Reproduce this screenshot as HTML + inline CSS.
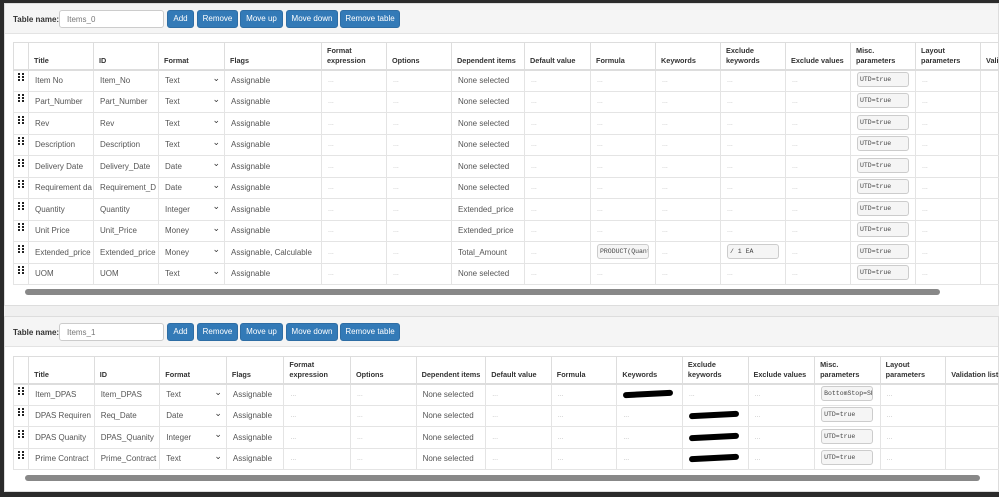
<!DOCTYPE html>
<html><head><meta charset="utf-8"><style>
*{box-sizing:border-box;margin:0;padding:0}
body{width:999px;height:497px;background:#2b2b2b;font-family:"Liberation Sans",Arial,sans-serif;overflow:hidden;position:relative}
.pn{position:absolute;left:4px;width:995px;background:#fff;border:1px solid #ddd}
.hd{height:30px;background:#f5f5f5;border-bottom:1px solid #e3e3e3;position:relative}
.lbl{position:absolute;left:8px;top:11px;font-size:8px;font-weight:bold;color:#333}
.inp{position:absolute;left:54px;top:6px;width:105px;height:18px;border:1px solid #ccc;border-radius:3px;background:#fff;font-size:8px;color:#777;padding:4px 7px}
.b{position:absolute;top:6px;height:18px;background:#337ab7;border:1px solid #2e6da4;border-radius:3px;color:#fff;font-size:8px;text-align:center;line-height:16px}
table{position:absolute;left:8px;border-collapse:collapse;table-layout:fixed;font-size:8px;color:#555}
th{font-weight:bold;color:#333;text-align:left;vertical-align:bottom;padding:2px 3px 3px 5px;border:1px solid #ddd;border-bottom:2px solid #ddd;height:27px;line-height:10px;font-size:7.3px;white-space:normal}
td{border:1px solid #e4e4e4;height:21.5px;padding:0 6px;white-space:nowrap;overflow:hidden}
td.d{color:#bbb;font-size:7px}
td.g{padding:0 0 0 4px}
.gr{display:inline-block;width:2px;height:2px;background:#222;box-shadow:0 3px #222,0 6px #222,4px 0 #222,4px 3px #222,4px 6px #222;vertical-align:top;margin-top:-3px}
.sel{position:relative}
.sel:after{content:"⌄";position:absolute;right:4px;top:2px;font-size:9px;color:#333}
.m{display:inline-block;border:1px solid #ccc;border-radius:3px;background:#f5f5f5;font-family:"Liberation Mono",monospace;font-size:6.5px;color:#444;padding:3px 2px;width:52px;height:15px;overflow:hidden}
.red{display:inline-block;width:50px;height:6px;background:#000;border-radius:3px;transform:rotate(-3deg)}
.sb{position:absolute;left:20px;height:6px;background:#888;border-radius:3px}
</style></head><body>

<div class="pn" style="top:3px;height:303px">
 <div class="hd"><span class="lbl">Table name:</span><div class="inp">Items_0</div>
  <div class="b" style="left:162px;width:27px">Add</div>
  <div class="b" style="left:192px;width:41px">Remove</div>
  <div class="b" style="left:235px;width:43px">Move up</div>
  <div class="b" style="left:281px;width:52px">Move down</div>
  <div class="b" style="left:335px;width:60px">Remove table</div>
 </div>
 <table style="top:38px;width:1020px">
 <colgroup><col style="width:15px"><col style="width:65px"><col style="width:65px"><col style="width:66px"><col style="width:97px"><col style="width:65px"><col style="width:65px"><col style="width:73px"><col style="width:66px"><col style="width:65px"><col style="width:65px"><col style="width:65px"><col style="width:65px"><col style="width:65px"><col style="width:65px"><col style="width:53px"></colgroup>
 <tr><th></th><th>Title</th><th>ID</th><th>Format</th><th>Flags</th><th>Format expression</th><th>Options</th><th style="white-space:nowrap">Dependent items</th><th>Default value</th><th>Formula</th><th>Keywords</th><th>Exclude keywords</th><th style="white-space:nowrap">Exclude values</th><th>Misc. parameters</th><th>Layout parameters</th><th>Vali</th></tr>
 <tr><td class="g"><span class="gr"></span></td><td>Item No</td><td>Item_No</td><td class="sel">Text</td><td>Assignable</td><td class="d">...</td><td class="d">...</td><td>None selected</td><td class="d">...</td><td class="d">...</td><td class="d">...</td><td class="d">...</td><td class="d">...</td><td><span class="m">UTD=true</span></td><td class="d">...</td><td></td></tr>
 <tr><td class="g"><span class="gr"></span></td><td>Part_Number</td><td>Part_Number</td><td class="sel">Text</td><td>Assignable</td><td class="d">...</td><td class="d">...</td><td>None selected</td><td class="d">...</td><td class="d">...</td><td class="d">...</td><td class="d">...</td><td class="d">...</td><td><span class="m">UTD=true</span></td><td class="d">...</td><td></td></tr>
 <tr><td class="g"><span class="gr"></span></td><td>Rev</td><td>Rev</td><td class="sel">Text</td><td>Assignable</td><td class="d">...</td><td class="d">...</td><td>None selected</td><td class="d">...</td><td class="d">...</td><td class="d">...</td><td class="d">...</td><td class="d">...</td><td><span class="m">UTD=true</span></td><td class="d">...</td><td></td></tr>
 <tr><td class="g"><span class="gr"></span></td><td>Description</td><td>Description</td><td class="sel">Text</td><td>Assignable</td><td class="d">...</td><td class="d">...</td><td>None selected</td><td class="d">...</td><td class="d">...</td><td class="d">...</td><td class="d">...</td><td class="d">...</td><td><span class="m">UTD=true</span></td><td class="d">...</td><td></td></tr>
 <tr><td class="g"><span class="gr"></span></td><td>Delivery Date</td><td>Delivery_Date</td><td class="sel">Date</td><td>Assignable</td><td class="d">...</td><td class="d">...</td><td>None selected</td><td class="d">...</td><td class="d">...</td><td class="d">...</td><td class="d">...</td><td class="d">...</td><td><span class="m">UTD=true</span></td><td class="d">...</td><td></td></tr>
 <tr><td class="g"><span class="gr"></span></td><td>Requirement da</td><td>Requirement_D</td><td class="sel">Date</td><td>Assignable</td><td class="d">...</td><td class="d">...</td><td>None selected</td><td class="d">...</td><td class="d">...</td><td class="d">...</td><td class="d">...</td><td class="d">...</td><td><span class="m">UTD=true</span></td><td class="d">...</td><td></td></tr>
 <tr><td class="g"><span class="gr"></span></td><td>Quantity</td><td>Quantity</td><td class="sel">Integer</td><td>Assignable</td><td class="d">...</td><td class="d">...</td><td>Extended_price</td><td class="d">...</td><td class="d">...</td><td class="d">...</td><td class="d">...</td><td class="d">...</td><td><span class="m">UTD=true</span></td><td class="d">...</td><td></td></tr>
 <tr><td class="g"><span class="gr"></span></td><td>Unit Price</td><td>Unit_Price</td><td class="sel">Money</td><td>Assignable</td><td class="d">...</td><td class="d">...</td><td>Extended_price</td><td class="d">...</td><td class="d">...</td><td class="d">...</td><td class="d">...</td><td class="d">...</td><td><span class="m">UTD=true</span></td><td class="d">...</td><td></td></tr>
 <tr><td class="g"><span class="gr"></span></td><td>Extended_price</td><td>Extended_price</td><td class="sel">Money</td><td>Assignable, Calculable</td><td class="d">...</td><td class="d">...</td><td>Total_Amount</td><td class="d">...</td><td><span class="m">PRODUCT(Quant</span></td><td class="d">...</td><td><span class="m">/ 1 EA</span></td><td class="d">...</td><td><span class="m">UTD=true</span></td><td class="d">...</td><td></td></tr>
 <tr><td class="g"><span class="gr"></span></td><td>UOM</td><td>UOM</td><td class="sel">Text</td><td>Assignable</td><td class="d">...</td><td class="d">...</td><td>None selected</td><td class="d">...</td><td class="d">...</td><td class="d">...</td><td class="d">...</td><td class="d">...</td><td><span class="m">UTD=true</span></td><td class="d">...</td><td></td></tr>
 </table>
 <div class="sb" style="top:285px;width:915px"></div>
</div>

<div style="position:absolute;left:4px;top:306px;width:995px;height:10px;background:#f0f0f0"></div>

<div class="pn" style="top:316px;height:176px">
 <div class="hd"><span class="lbl">Table name:</span><div class="inp">Items_1</div>
  <div class="b" style="left:162px;width:27px">Add</div>
  <div class="b" style="left:192px;width:41px">Remove</div>
  <div class="b" style="left:235px;width:43px">Move up</div>
  <div class="b" style="left:281px;width:52px">Move down</div>
  <div class="b" style="left:335px;width:60px">Remove table</div>
 </div>
 <table style="top:39px;width:1000px">
 <colgroup><col style="width:15px"><col style="width:65px"><col style="width:65px"><col style="width:66px"><col style="width:57px"><col style="width:66px"><col style="width:65px"><col style="width:69px"><col style="width:65px"><col style="width:65px"><col style="width:65px"><col style="width:65px"><col style="width:66px"><col style="width:65px"><col style="width:65px"><col style="width:66px"></colgroup>
 <tr><th></th><th>Title</th><th>ID</th><th>Format</th><th>Flags</th><th>Format expression</th><th>Options</th><th style="white-space:nowrap">Dependent items</th><th>Default value</th><th>Formula</th><th>Keywords</th><th>Exclude keywords</th><th style="white-space:nowrap">Exclude values</th><th>Misc. parameters</th><th>Layout parameters</th><th style="white-space:nowrap">Validation list</th></tr>
 <tr><td class="g"><span class="gr"></span></td><td>Item_DPAS</td><td>Item_DPAS</td><td class="sel">Text</td><td>Assignable</td><td class="d">...</td><td class="d">...</td><td>None selected</td><td class="d">...</td><td class="d">...</td><td><span class="red"></span></td><td class="d">...</td><td class="d">...</td><td><span class="m">BottomStop=SP</span></td><td class="d">...</td><td class="sel"></td></tr>
 <tr><td class="g"><span class="gr"></span></td><td>DPAS Requiren</td><td>Req_Date</td><td class="sel">Date</td><td>Assignable</td><td class="d">...</td><td class="d">...</td><td>None selected</td><td class="d">...</td><td class="d">...</td><td class="d">...</td><td><span class="red"></span></td><td class="d">...</td><td><span class="m">UTD=true</span></td><td class="d">...</td><td class="sel"></td></tr>
 <tr><td class="g"><span class="gr"></span></td><td>DPAS Quanity</td><td>DPAS_Quanity</td><td class="sel">Integer</td><td>Assignable</td><td class="d">...</td><td class="d">...</td><td>None selected</td><td class="d">...</td><td class="d">...</td><td class="d">...</td><td><span class="red"></span></td><td class="d">...</td><td><span class="m">UTD=true</span></td><td class="d">...</td><td class="sel"></td></tr>
 <tr><td class="g"><span class="gr"></span></td><td>Prime Contract</td><td>Prime_Contract</td><td class="sel">Text</td><td>Assignable</td><td class="d">...</td><td class="d">...</td><td>None selected</td><td class="d">...</td><td class="d">...</td><td class="d">...</td><td><span class="red"></span></td><td class="d">...</td><td><span class="m">UTD=true</span></td><td class="d">...</td><td class="sel"></td></tr>
 </table>
 <div class="sb" style="top:158px;width:955px"></div>
</div>
</body></html>
